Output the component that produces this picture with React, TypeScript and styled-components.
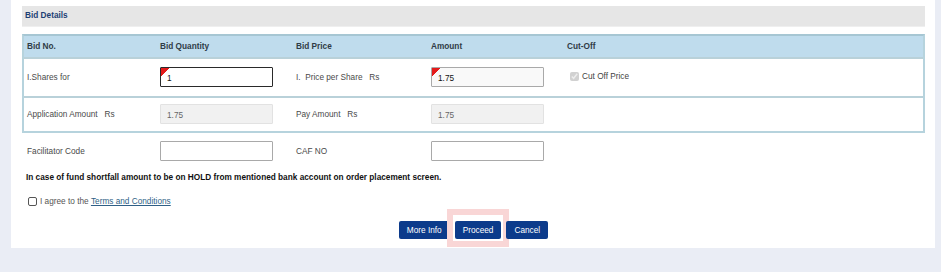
import styled, { createGlobalStyle } from 'styled-components';

const Global = createGlobalStyle`
  html, body {
    margin: 0;
    padding: 0;
    background: #eaedf5;
    font-family: "Liberation Sans", Arial, sans-serif;
  }
`;

const COLS = '133px 136px 135px 136px 1fr';

function App() {
  return (
    <>
      <Global />
      <Panel>
        <SectionHeader>Bid Details</SectionHeader>
        <BidTable>
          <HeadRow>
            <HeadCell>Bid No.</HeadCell>
            <HeadCell>Bid Quantity</HeadCell>
            <HeadCell>Bid Price</HeadCell>
            <HeadCell>Amount</HeadCell>
            <HeadCell>Cut-Off</HeadCell>
          </HeadRow>
          <Row $height={37}>
            <Cell>I.Shares for</Cell>
            <Cell>
              <TextInput $variant='focused' $marked defaultValue='1' />
            </Cell>
            <Cell>I.&nbsp; Price per Share&nbsp;&nbsp; Rs</Cell>
            <Cell>
              <TextInput $variant='soft' $marked defaultValue='1.75' />
            </Cell>
            <Cell>
              <CheckLabel>
                <CutOffBox type='checkbox' checked disabled readOnly />
                Cut Off Price
              </CheckLabel>
            </Cell>
          </Row>
          <Row $height={33}>
            <Cell>Application Amount&nbsp;&nbsp; Rs</Cell>
            <Cell>
              <TextInput $variant='disabled' value='1.75' readOnly />
            </Cell>
            <Cell>Pay Amount&nbsp;&nbsp; Rs</Cell>
            <Cell>
              <TextInput $variant='disabled' value='1.75' readOnly />
            </Cell>
            <Cell />
          </Row>
        </BidTable>
        <PlainRow>
          <Cell>Facilitator Code</Cell>
          <Cell>
            <TextInput />
          </Cell>
          <Cell>CAF NO</Cell>
          <Cell>
            <TextInput />
          </Cell>
          <Cell />
        </PlainRow>
        <Note>In case of fund shortfall amount to be on HOLD from mentioned bank account on order placement screen.</Note>
        <AgreeRow>
          <AgreeBox type='checkbox' />
          I agree to the <TermsLink href='#'>Terms and Conditions</TermsLink>
        </AgreeRow>
        <Actions>
          <Button>More Info</Button>
          <Button $highlight>Proceed</Button>
          <Button>Cancel</Button>
        </Actions>
      </Panel>
    </>
  );
}

export default App;

const Panel = styled.div`
  margin-left: 11px;
  width: 924px;
  box-sizing: border-box;
  background: #fff;
  padding: 6px 10px 9px 11px;
`;

const SectionHeader = styled.div`
  height: 20px;
  line-height: 19px;
  background: #e6e6e6;
  border-bottom: 1px solid #efefef;
  padding-left: 3px;
  font-size: 8.25px;
  font-weight: bold;
  color: #1d3f74;
`;

const BidTable = styled.div`
  margin-top: 7px;
  border: 2px solid #b6d3dd;
  border-top-color: #a6c6d3;
`;

const HeadRow = styled.div`
  display: grid;
  grid-template-columns: ${COLS};
  height: 21px;
  align-items: center;
  background: #bfdced;
`;

const HeadCell = styled.div`
  padding-left: 3px;
  margin-top: -1px;
  font-size: 8.25px;
  font-weight: bold;
  color: #2f3b46;
`;

const Row = styled.div<{ $height: number }>`
  display: grid;
  grid-template-columns: ${COLS};
  height: ${(p) => p.$height}px;
  align-items: center;
  border-top: 2px solid #b9d1d9;
`;

const PlainRow = styled.div`
  display: grid;
  grid-template-columns: ${COLS};
  height: 37px;
  align-items: center;
  padding-left: 2px;
`;

const Cell = styled.div`
  padding-left: 3px;
  font-size: 8.25px;
  color: #4a4a4a;
  white-space: nowrap;
`;

const TextInput = styled.input<{ $variant?: 'focused' | 'soft' | 'disabled'; $marked?: boolean }>`
  box-sizing: border-box;
  width: 113px;
  height: 20px;
  margin: -1px 0 0 0;
  padding: 2px 6px 0;
  font-family: inherit;
  font-size: 8.25px;
  color: ${(p) => (p.$variant === 'disabled' ? '#666' : '#111')};
  outline: none;
  border-radius: 1px;
  border: ${(p) =>
    p.$variant === 'focused'
      ? '1.5px solid #2a2a2a'
      : p.$variant === 'disabled'
        ? '1px solid #e2e2e2'
        : '1px solid #a9a9a9'};
  background: ${(p) =>
    (p.$marked ? 'linear-gradient(135deg, #e41b1b 0 6px, transparent 6px), ' : '') +
    (p.$variant === 'disabled' ? '#f1f1f1' : p.$variant === 'soft' ? '#f9f9f9' : '#fff')};
`;

const CheckLabel = styled.label`
  display: flex;
  align-items: center;
  gap: 3px;
  margin: -2px 0 0 3px;
  color: #444;
`;

const CutOffBox = styled.input`
  width: 9px;
  height: 9px;
  margin: 0;
`;

const Note = styled.div`
  margin-top: 1px;
  padding-left: 4px;
  line-height: 14px;
  font-size: 8.25px;
  font-weight: bold;
  color: #111;
`;

const AgreeRow = styled.label`
  display: flex;
  align-items: center;
  margin-top: 9px;
  padding-left: 6px;
  height: 14px;
  font-size: 8.25px;
  color: #555;
  white-space: pre;
`;

const AgreeBox = styled.input`
  appearance: none;
  width: 9px;
  height: 9px;
  margin: 0 3px 0 0;
  border: 1px solid #555;
  border-radius: 2px;
  background: #fff;
`;

const TermsLink = styled.a`
  color: #2f5f86;
  text-decoration: underline;
`;

const Actions = styled.div`
  display: flex;
  justify-content: center;
  gap: 5px;
  margin-top: 13px;
`;

const Button = styled.button<{ $highlight?: boolean }>`
  position: relative;
  height: 18px;
  padding: 0 8px;
  border: none;
  border-radius: 2px;
  background: #0c3b8b;
  color: #fff;
  font-family: inherit;
  font-size: 8.25px;
  cursor: pointer;

  ${(p) =>
    p.$highlight &&
    `
    &::after {
      content: '';
      position: absolute;
      top: -12px;
      bottom: -8px;
      left: -8px;
      right: -8px;
      border: 6px solid #f9d6d6;
      pointer-events: none;
    }
  `}
`;
